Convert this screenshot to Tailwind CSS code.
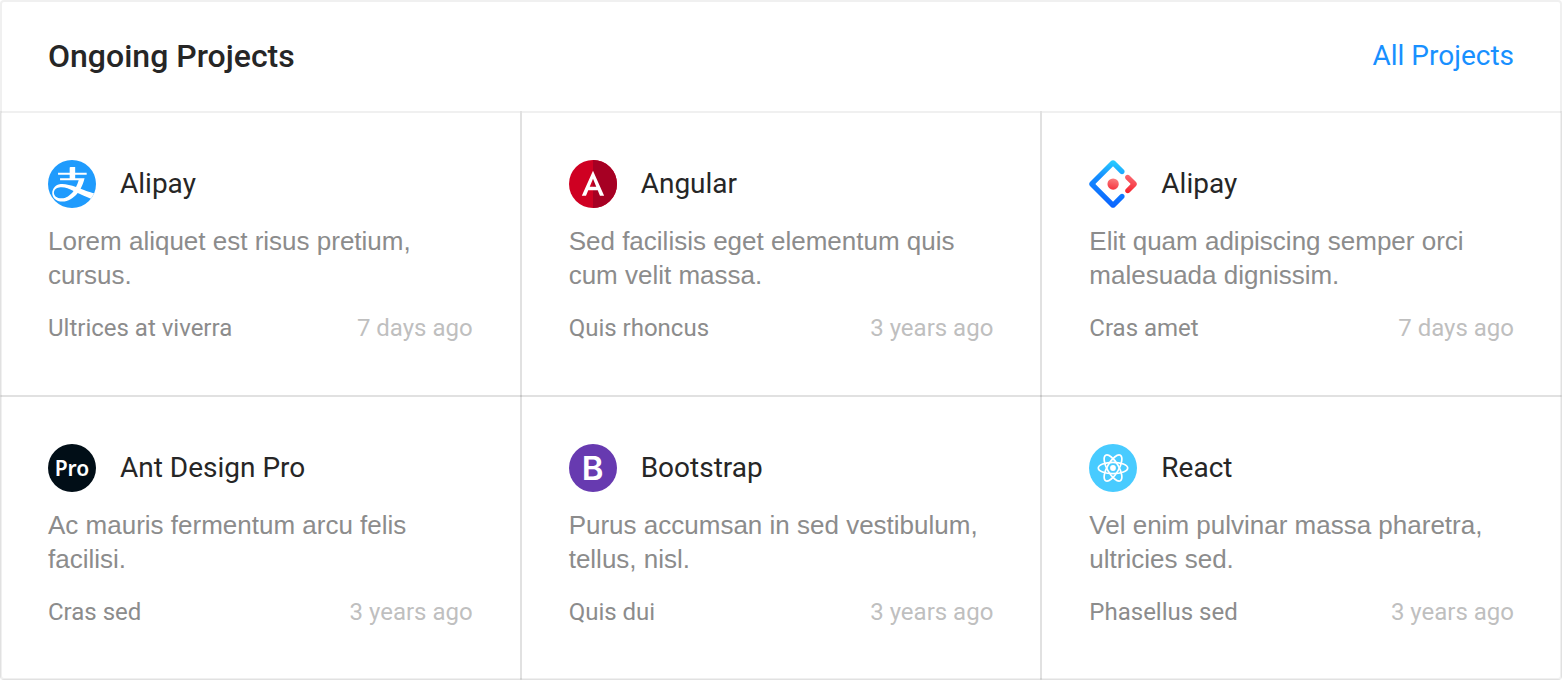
<!DOCTYPE html>
<html lang="en">
<head>
<meta charset="utf-8">
<meta name="viewport" content="width=device-width, initial-scale=1">
<title>Ongoing Projects</title>
<script src="https://cdn.jsdelivr.net/npm/@tailwindcss/browser@4"></script>
</head>
<body class="bg-white font-[Roboto,sans-serif] text-[#262626]">
<section class="overflow-hidden rounded-[4px] inset-shadow-[0_0_0_2px_#f0f0f0]">
  <header class="flex h-28 items-center justify-between px-12">
    <h2 class="text-[32px] leading-10 font-medium">Ongoing Projects</h2>
    <a href="#" class="text-[28px] leading-10 text-[#1890ff]">All Projects</a>
  </header>
  <div class="grid grid-cols-3">

    <article class="p-12 shadow-[0_0_0_1px_rgba(0,0,0,0.06)] inset-shadow-[0_0_0_1px_rgba(0,0,0,0.06)]">
      <div class="flex items-center gap-6">
        <svg class="size-12 shrink-0" viewBox="64 64 896 896" aria-hidden="true">
          <clipPath id="disc"><circle cx="512" cy="512" r="448"/></clipPath>
          <circle cx="512" cy="512" r="448" fill="#1f9bfd"/>
          <g clip-path="url(#disc)"><path transform="translate(-52.5 -60.6) scale(1.12 1.16)" fill="#fff" fill-rule="evenodd" d="M308.6 545.7c-19.8 2-57.1 10.7-77.4 28.6-61 53-24.5 150 99 150 71.8 0 143.5-45.7 199.8-119-80.2-38.9-148.1-66.8-221.4-59.6zm460.5 67c100.1 33.4 154.7 43 166.7 44.8L885.5 759.5c-75.6-29.8-213.6-85-286.8-120.1-69.9 85.7-160.1 137.8-253.7 137.8-158.4 0-212.1-138.1-137.2-229 16.3-19.8 44.2-38.7 87.3-49.4 67.5-16.5 175 10.3 275.7 43.4 18.1-33.3 33.4-69.9 44.7-108.9H305.1V402h160v-56.2H271.3v-31.3h193.8v-80.1s0-13.5 13.7-13.5H557v93.6h191.7v31.3H557.1V402h156.4c-15 61.1-37.7 117.4-66.2 166.8 47.5 17.1 90.1 33.3 121.8 43.9z"/></g>
        </svg>
        <h3 class="text-[28px] leading-10">Alipay</h3>
      </div>
      <p class="mt-4 font-['Liberation_Sans',Arial,sans-serif] text-[26px] leading-[34px] text-[#8c8c8c]">Lorem aliquet est risus pretium, cursus.</p>
      <div class="mt-4 flex justify-between text-[24px] leading-10"><span class="text-[#8c8c8c]">Ultrices at viverra</span><time class="text-[#bfbfbf]">7 days ago</time></div>
    </article>

    <article class="p-12 shadow-[0_0_0_1px_rgba(0,0,0,0.06)] inset-shadow-[0_0_0_1px_rgba(0,0,0,0.06)]">
      <div class="flex items-center gap-6">
        <svg class="size-12 shrink-0" viewBox="0 0 250 250" aria-hidden="true"><circle cx="125" cy="125" r="125" fill="#cf0022"/><path fill="#a60023" d="M125 0a125 125 0 0 1 0 250z"/><path fill="#fff" d="M125 55.7 66.8 186.2h21.7l11.7-29.2h49.4l11.7 29.2H183zM142 139H108l17-40.9z"/></svg>
        <h3 class="text-[28px] leading-10">Angular</h3>
      </div>
      <p class="mt-4 font-['Liberation_Sans',Arial,sans-serif] text-[26px] leading-[34px] text-[#8c8c8c]">Sed facilisis eget elementum quis cum velit massa.</p>
      <div class="mt-4 flex justify-between text-[24px] leading-10"><span class="text-[#8c8c8c]">Quis rhoncus</span><time class="text-[#bfbfbf]">3 years ago</time></div>
    </article>

    <article class="p-12 shadow-[0_0_0_1px_rgba(0,0,0,0.06)] inset-shadow-[0_0_0_1px_rgba(0,0,0,0.06)]">
      <div class="flex items-center gap-6">
        <svg class="size-12 shrink-0" viewBox="0 0 200 200" aria-hidden="true">
          <defs>
            <linearGradient id="blue" x1=".6" y1="0" x2=".45" y2="1"><stop offset="0" stop-color="#29cdff"/><stop offset=".38" stop-color="#148eff"/><stop offset="1" stop-color="#0a60ff"/></linearGradient>
            <linearGradient id="red" x1=".6" y1="0" x2=".4" y2="1"><stop offset="0" stop-color="#fa6e75"/><stop offset="1" stop-color="#f5222d"/></linearGradient>
            <linearGradient id="dot" x1=".6" y1="0" x2=".4" y2="1"><stop offset="0" stop-color="#fa7f80"/><stop offset="1" stop-color="#f5333f"/></linearGradient>
          </defs>
          <path fill="url(#blue)" d="M91.588 4.177 4.18 91.513c-4.7 4.695-4.7 12.279 0 16.974l87.408 87.336c4.7 4.696 12.29 4.696 16.989 0l36.648-36.618c4.209-4.205 4.209-11.023 0-15.228-4.208-4.205-11.031-4.205-15.24 0l-27.783 27.76c-1.17 1.17-2.945 1.17-4.114 0l-69.802-69.744c-1.17-1.169-1.17-2.942 0-4.111l69.802-69.744c1.17-1.169 2.944-1.169 4.114 0l27.783 27.76c4.209 4.205 11.032 4.205 15.24 0 4.209-4.205 4.209-11.022 0-15.227L108.581 4.056c-4.719-4.594-12.312-4.557-16.993.12z"/>
          <path fill="url(#red)" d="M153.686 135.855c4.208 4.205 11.031 4.205 15.24 0l27.034-27.012c4.7-4.696 4.7-12.28 0-16.974l-27.27-27.15c-4.218-4.2-11.043-4.195-15.254.013-4.209 4.205-4.209 11.022 0 15.227l18.418 18.403c1.17 1.17 1.17 2.943 0 4.111l-18.168 18.154c-4.209 4.205-4.209 11.023 0 15.228z"/>
          <circle cx="100.5" cy="100.4" r="23.6" fill="url(#dot)"/>
        </svg>
        <h3 class="text-[28px] leading-10">Alipay</h3>
      </div>
      <p class="mt-4 font-['Liberation_Sans',Arial,sans-serif] text-[26px] leading-[34px] text-[#8c8c8c]">Elit quam adipiscing semper orci malesuada dignissim.</p>
      <div class="mt-4 flex justify-between text-[24px] leading-10"><span class="text-[#8c8c8c]">Cras amet</span><time class="text-[#bfbfbf]">7 days ago</time></div>
    </article>

    <article class="p-12 shadow-[0_0_0_1px_rgba(0,0,0,0.06)] inset-shadow-[0_0_0_1px_rgba(0,0,0,0.06)]">
      <div class="flex items-center gap-6">
        <span class="flex size-12 shrink-0 items-center justify-center rounded-full bg-[#010e17] font-['Noto_Sans',sans-serif] text-[21px] leading-none font-semibold text-white">Pro</span>
        <h3 class="text-[28px] leading-10">Ant Design Pro</h3>
      </div>
      <p class="mt-4 font-['Liberation_Sans',Arial,sans-serif] text-[26px] leading-[34px] text-[#8c8c8c]">Ac mauris fermentum arcu felis facilisi.</p>
      <div class="mt-4 flex justify-between text-[24px] leading-10"><span class="text-[#8c8c8c]">Cras sed</span><time class="text-[#bfbfbf]">3 years ago</time></div>
    </article>

    <article class="p-12 shadow-[0_0_0_1px_rgba(0,0,0,0.06)] inset-shadow-[0_0_0_1px_rgba(0,0,0,0.06)]">
      <div class="flex items-center gap-6">
        <span class="flex size-12 shrink-0 items-center justify-center rounded-full bg-[#673ab0] font-[Inter,sans-serif] text-[33px] leading-none font-semibold text-white">B</span>
        <h3 class="text-[28px] leading-10">Bootstrap</h3>
      </div>
      <p class="mt-4 font-['Liberation_Sans',Arial,sans-serif] text-[26px] leading-[34px] text-[#8c8c8c]">Purus accumsan in sed vestibulum, tellus, nisl.</p>
      <div class="mt-4 flex justify-between text-[24px] leading-10"><span class="text-[#8c8c8c]">Quis dui</span><time class="text-[#bfbfbf]">3 years ago</time></div>
    </article>

    <article class="p-12 shadow-[0_0_0_1px_rgba(0,0,0,0.06)] inset-shadow-[0_0_0_1px_rgba(0,0,0,0.06)]">
      <div class="flex items-center gap-6">
        <svg class="size-12 shrink-0" viewBox="0 0 48 48" aria-hidden="true"><circle cx="24" cy="24" r="24" fill="#48cbff"/><g fill="none" stroke="#fff" stroke-width="1.7"><ellipse cx="24" cy="24" rx="14.7" ry="5.7"/><ellipse cx="24" cy="24" rx="14.7" ry="5.7" transform="rotate(60 24 24)"/><ellipse cx="24" cy="24" rx="14.7" ry="5.7" transform="rotate(120 24 24)"/></g><circle cx="24" cy="24" r="2.9" fill="#fff"/></svg>
        <h3 class="text-[28px] leading-10">React</h3>
      </div>
      <p class="mt-4 font-['Liberation_Sans',Arial,sans-serif] text-[26px] leading-[34px] text-[#8c8c8c]">Vel enim pulvinar massa pharetra, ultricies sed.</p>
      <div class="mt-4 flex justify-between text-[24px] leading-10"><span class="text-[#8c8c8c]">Phasellus sed</span><time class="text-[#bfbfbf]">3 years ago</time></div>
    </article>

  </div>
</section>
</body>
</html>
